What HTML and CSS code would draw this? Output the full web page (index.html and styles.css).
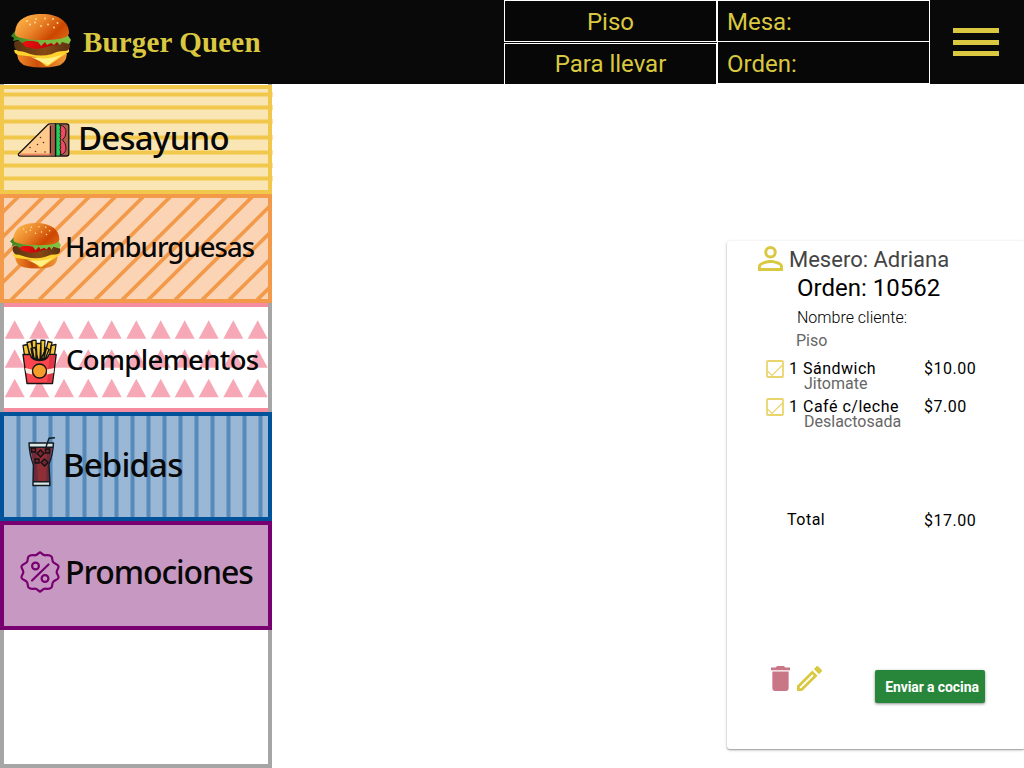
FILE: index.html
```html
<!DOCTYPE html>
<html lang="es">
<head>
<meta charset="utf-8">
<title>Burger Queen</title>
<link rel="stylesheet" href="styles.css">
</head>
<body>
<svg class="defs" width="0" height="0" aria-hidden="true">
  <defs>
    <linearGradient id="bun" x1="0" y1="0.2" x2="1" y2="0.7"><stop offset="0" stop-color="#ffb74a"/><stop offset=".45" stop-color="#e88228"/><stop offset=".8" stop-color="#cc4600"/><stop offset="1" stop-color="#d65d10"/></linearGradient>
    <linearGradient id="bunLow" x1="0" y1="0" x2="1" y2="0"><stop offset="0" stop-color="#f08a2a"/><stop offset=".4" stop-color="#cc4f0a"/><stop offset="1" stop-color="#f09a38"/></linearGradient>
    <linearGradient id="leaf" x1="0" y1="0" x2="1" y2="0"><stop offset="0" stop-color="#38801c"/><stop offset=".5" stop-color="#77b53e"/><stop offset="1" stop-color="#83c340"/></linearGradient>
    <linearGradient id="tomato" x1="0" y1="0" x2="1" y2="0"><stop offset="0" stop-color="#f01010"/><stop offset="1" stop-color="#a40000"/></linearGradient>
    <linearGradient id="meat" x1="0" y1="0" x2="1" y2="0"><stop offset="0" stop-color="#5a3213"/><stop offset=".55" stop-color="#874914"/><stop offset="1" stop-color="#5c3113"/></linearGradient>
    <symbol id="burger" viewBox="0 0 60 54" preserveAspectRatio="none">
      <path fill="url(#bunLow)" d="M6 40H56Q55 50 46 52Q31 55 16 52Q7 50 6 40Z"/>
      <path fill="#ffd22e" d="M3 36L58 35L58 38L53 41L37 52L35 52L24 43L7 41L4 39Z"/>
      <path fill="#fff08a" d="M20 43Q38 47 52 40L37 51Z"/>
      <path fill="url(#meat)" d="M3 30Q3 26 10 27H53Q59 27 59 32Q59 37 53 37Q46 37 41 40Q30 43 19 40Q12 37 7 37Q3 35 3 30Z"/>
      <path fill="url(#tomato)" d="M11 27Q30 23 50 27L46 31L38 32L32 34L25 35L15 33Q11 30 11 27Z"/>
      <path fill="url(#leaf)" d="M0 22L4 17L56 20L60 26L58 30L51 28L49 31L46 28L43 31L40 29L36 31L34 28L30 32L27 28L22 27L15 27L11 29L7 26L2 27L3 24Z"/>
      <path fill="url(#bun)" d="M4 20C4 7 13 0 31 0C48 0 58 8 58 19C58 25 43 26 33 26C18 26 4 24 4 20Z"/>
      <g fill="#ffdf9a"><circle cx="16" cy="7" r=".9"/><circle cx="25" cy="5" r=".9"/><circle cx="34" cy="4.500" r=".9"/><circle cx="42" cy="5" r=".9"/><circle cx="46.500" cy="9" r=".9"/><circle cx="37" cy="10.500" r=".9"/><circle cx="30" cy="12" r=".9"/><circle cx="24" cy="8.500" r=".9"/><circle cx="19" cy="10.500" r=".9"/><circle cx="43" cy="13.500" r=".9"/></g>
    </symbol>
  </defs>
</svg>

<header class="topbar">
  <div class="brand">
    <svg class="brand-icon"><use href="#burger"/></svg>
    <span class="brand-name">Burger Queen</span>
  </div>
  <div class="order-type">
    <div class="cell">Piso</div>
    <div class="cell cell-low">Para llevar</div>
  </div>
  <div class="order-info">
    <div class="cell cell-left">Mesa:</div>
    <div class="cell cell-left cell-joined">Orden:</div>
  </div>
  <button class="menu-button" aria-label="Menú"><span></span><span></span><span></span></button>
</header>

<div class="page">
  <nav class="sidebar">
    <a class="tile tile-breakfast">
      <svg class="decor" viewBox="0 0 273 109"><g fill="#f2c84c"><path fill-opacity=".5" d="M0 7h273v5H0zM0 20h273v5H0zM0 34h273v5H0zM0 50h273v5H0zM0 65h273v5H0zM0 78h273v5H0zM0 91h273v5H0z"/><path d="M0 8h272v3H0zM0 21h272v3H0zM0 35h272v3H0zM0 51h272v3H0zM0 66h272v3H0zM0 79h272v3H0zM0 92h272v3H0z"/></g></svg>
      <svg class="icon icon-sandwich" viewBox="0 0 52 34"><path fill="#ffca8c" stroke="#151515" stroke-width="1.300" stroke-linejoin="round" d="M1 31L30 2Q31 .8 33 .8H38V33H3Q.3 33 1 31Z"/><path fill="#ef8b62" d="M2 30.500H33V32.500H3Z"/><path fill="#a65c48" d="M32 1.500h5.500v31H32z"/><path stroke="#151515" d="M33 3v27"/><path fill="#ad614d" stroke="#151515" stroke-width="1.300" d="M38 .8H49Q51.300.8 51.300 3V31Q51.300 33 49 33H38Z"/><path fill="#f44760" stroke="#151515" stroke-width=".9" d="M42 2Q48.500 3 48.500 9Q48.500 14 45 17Q48.500 20 48.500 25Q48.500 31 42 32Z"/><path fill="#1fd159" d="M38.700 1.500H42q2 3 .5 5q1.500 2 0 4q1.500 2 0 4q1.500 2 0 4q1.500 2 0 4q1.500 2 0 4q1.500 2 0 6h-3.800z"/><path fill="none" stroke="#151515" d="M42 1.500q2 3 .5 5q1.500 2 0 4q1.500 2 0 4q1.500 2 0 4q1.500 2 0 4q1.500 2 0 4q1.500 2 0 6M38.300 1v32"/><g fill="#493326"><circle cx="23" cy="14.500" r=".8"/><circle cx="26" cy="19.500" r=".8"/><circle cx="20" cy="21.500" r=".8"/><circle cx="12.500" cy="24.500" r=".8"/><circle cx="18" cy="28.500" r=".8"/><circle cx="27.500" cy="29" r=".8"/></g></svg>
      <span class="label label-breakfast">Desayuno</span>
    </a>
    <a class="tile tile-burgers">
      <svg class="decor" viewBox="0 0 272 109"><path fill="none" stroke="#f39a4a" stroke-width="3.700" d="M-87 107L19 2M-62 107L44 2M-41 107L65 2M-16 107L90 2M10 107L116 2M38 107L144 2M65 107L171 2M94 107L200 2M121 107L227 2M147 107L253 2M174 107L280 2M201 107L307 2M228 107L334 2M256 107L362 2"/></svg>
      <svg class="icon icon-burger"><use href="#burger"/></svg>
      <span class="label label-burgers">Hamburguesas</span>
    </a>
    <a class="tile tile-sides">
      <svg class="decor" viewBox="0 0 273 109"><defs><path id="tri" d="M-10 18.500L0 0L10 18.500Z"/><g id="triRow" fill="#f7a8b7"><use href="#tri" x="14.700"/><use href="#tri" x="39.300"/><use href="#tri" x="64"/><use href="#tri" x="88.300"/><use href="#tri" x="111.700"/><use href="#tri" x="136.300"/><use href="#tri" x="160.700"/><use href="#tri" x="184.700"/><use href="#tri" x="208.700"/><use href="#tri" x="233.300"/><use href="#tri" x="257.700"/></g></defs><use href="#triRow" y="17.300"/><use href="#triRow" y="46.300"/><use href="#triRow" y="75.700"/></svg>
      <svg class="icon icon-fries" viewBox="0 0 35 45"><g fill="#f4c636" stroke="#151515" stroke-width="1.300" stroke-linejoin="round"><path d="M1 6L5 5L9 19H3ZM29 6L34 5L32 19H27ZM5 3L9 2L12 18H8ZM26 2L30 3L27 19H22ZM10 1L14 .7L15 19H11ZM19 .7L23 1L22 19H18ZM14 4H19V20H14ZM9 9L13 8L16 20H11ZM24 8L27 10L23 20H19Z"/></g><path fill="#fb4650" stroke="#151515" stroke-width="1.400" stroke-linejoin="round" d="M1 15H8Q10 21 17.500 21Q25 21 27 15H34.200L30.500 44H5Z"/><path fill="#df3645" d="M27.500 16H33L29.800 43H25Z"/><path fill="#f4eadb" d="M3 28.500L10 30V35L4.200 33.500ZM32.200 28.500L25 30V35L31.500 33.500Z"/><circle cx="17.500" cy="31.500" r="7" fill="#f59c2c" stroke="#151515" stroke-width="1.300"/></svg>
      <span class="label label-sides">Complementos</span>
    </a>
    <a class="tile tile-drinks">
      <svg class="decor" viewBox="0 0 273 109"><path stroke="#78a0c8" stroke-width="5" d="M18.500 0v109M34.500 0v109M50.500 0v109M67.500 0v109M84.500 0v109M100.500 0v109M116.500 0v109M132.500 0v109M148.500 0v109M164.500 0v109M180.500 0v109M196.500 0v109M212.500 0v109M228.500 0v109M244.500 0v109M260.500 0v109"/><path stroke="#558ab9" stroke-width="3" d="M18.500 0v109M34.500 0v109M50.500 0v109M67.500 0v109M84.500 0v109M100.500 0v109M116.500 0v109M132.500 0v109M148.500 0v109M164.500 0v109M180.500 0v109M196.500 0v109M212.500 0v109M228.500 0v109M244.500 0v109M260.500 0v109"/></svg>
      <svg class="icon icon-soda" viewBox="0 0 27 50"><path fill="#8e2f35" d="M1.500 9H24.500L21 26L22 47H5L6 29Z"/><path fill="#6e2a3a" d="M2 10H8L10 45H6V27ZM19 10H24L21 28V44H18Z"/><path fill="#dce8e6" d="M2 6H24.500V10H2ZM5 45H21V48.500H5Z"/><path fill="none" stroke="#121b22" stroke-width="1.400" stroke-linejoin="round" d="M1 6H25.500Q25 17 21 27L22 48.500H5L5.500 28Q1.500 18 1 6ZM2 10.300H24.500M5 44.800H21.500M18 10L21 1.200L27 .8"/><path fill="#752632" stroke="#121212" stroke-width="1.400" d="M12.500 13L16 16.500L12.500 20L9 16.500ZM16.500 22L20 25.500L16.500 29L13 25.500ZM3.500 11h4v4h-4ZM17.500 12h4v4h-4ZM7 22h4v4H7Z"/></svg>
      <span class="label label-drinks">Bebidas</span>
    </a>
    <a class="tile tile-promos">
      <svg class="icon icon-promo" viewBox="0 0 40 42" fill="none" stroke="#780070" stroke-width="2.200" stroke-linecap="round" stroke-linejoin="round"><path d="M20 1.300C17.500 2.500 17.500 4.500 14.500 4.300C12 4 10.500 3.500 8.500 5.500C7 8 8.500 9.500 6.500 11.500C4.500 13.200 1.500 13.500 1.400 15.500C1.500 18 3.300 18.500 3.300 21C3.300 23.500 1.500 24 1.400 26.500C1.500 28.500 4.500 28.800 6.500 30.500C8.500 32.500 7 34 8.500 36.500C10.500 38.500 12 38 14.500 37.700C17.500 37.500 17.500 39.500 20 40.700C22.500 39.500 22.500 37.500 25.500 37.700C28 38 29.500 38.500 31.500 36.500C33 34 31.500 32.500 33.500 30.500C35.500 28.800 38.500 28.500 38.600 26.500C38.500 24 36.700 23.500 36.700 21C36.700 18.500 38.500 18 38.600 15.500C38.500 13.500 35.500 13.200 33.500 11.500C31.500 9.500 33 8 31.500 5.500C29.500 3.500 28 4 25.500 4.300C22.500 4.500 22.500 2.500 20 1.300Z"/><path d="M12 29.500L28.500 13.500"/><circle cx="15.500" cy="15" r="3.400"/><circle cx="25" cy="27.500" r="3.400"/></svg>
      <span class="label label-promos">Promociones</span>
    </a>
  </nav>

  <main class="workspace">
    <section class="ticket">
      <div class="waiter">
        <svg class="waiter-icon" viewBox="4 4 16 16"><path fill="#dac840" d="M12 5.900a2.100 2.100 0 1 1 0 4.200 2.100 2.100 0 0 1 0-4.200m0 9c2.970 0 6.100 1.460 6.100 2.100v1.100H5.900V17c0-.64 3.130-2.100 6.100-2.100M12 4a4 4 0 1 0 0 8 4 4 0 0 0 0-8zm0 9c-2.670 0-8 1.340-8 4v3h16v-3c0-2.660-5.330-4-8-4z"/></svg>
        <span>Mesero: Adriana</span>
      </div>
      <h2 class="order-number">Orden: 10562</h2>
      <p class="client">Nombre cliente:</p>
      <p class="place">Piso</p>
      <div class="items">
        <div class="item">
          <svg class="check" viewBox="0 0 18 18"><rect x="1" y="1" width="16" height="16" rx="1"/><path d="M1.500 11L6 15.500L16.500 5"/></svg>
          <div class="item-text"><div class="item-name">1 Sándwich</div><div class="item-note">Jitomate</div></div>
          <div class="price">$10.00</div>
        </div>
        <div class="item">
          <svg class="check" viewBox="0 0 18 18"><rect x="1" y="1" width="16" height="16" rx="1"/><path d="M1.500 11L6 15.500L16.500 5"/></svg>
          <div class="item-text"><div class="item-name">1 Café c/leche</div><div class="item-note">Deslactosada</div></div>
          <div class="price">$7.00</div>
        </div>
      </div>
      <div class="total"><span class="total-label">Total</span><span class="total-price">$17.00</span></div>
      <div class="actions">
        <svg class="trash" viewBox="5 3 14 18" preserveAspectRatio="none"><path fill="#c97687" d="M6 19c0 1.100.9 2 2 2h8c1.100 0 2-.9 2-2V7H6v12zM19 4h-3.500l-1-1h-5l-1 1H5v2h14V4z"/></svg>
        <svg class="pencil" viewBox="3 3 18 18"><path fill="#dac840" d="M14.060 9.020l.92.920L5.920 19H5v-.92l9.060-9.060M17.660 3c-.25 0-.51.1-.7.290l-1.830 1.830 3.750 3.750 1.830-1.830c.39-.39.39-1.020 0-1.410l-2.340-2.340c-.2-.2-.45-.29-.71-.29zm-3.600 3.190L3 17.250V21h3.750L17.810 9.940l-3.750-3.750z"/></svg>
        <button class="send">Enviar a cocina</button>
      </div>
    </section>
  </main>
</div>
</body>
</html>
```
FILE: styles.css
```css
* { box-sizing: border-box; }
body { margin: 0; width: 1024px; height: 768px; overflow: hidden; background: #fff; font-family: Roboto, "Liberation Sans", sans-serif; color: #000; }
.defs { position: absolute; }
h2, p { margin: 0; font-weight: 400; }
svg { display: block; flex: none; }

.topbar { display: flex; height: 84px; background: #090909; color: #dac840; }
.brand { display: flex; width: 504px; padding: 14px 0 0 11px; }
.brand-icon { width: 60px; height: 54px; }
.brand-name { margin: 11px 0 0 12px; font: 700 29px/34px "Liberation Serif", serif; letter-spacing: 0.150px; white-space: nowrap; }
.order-type, .order-info { width: 213px; background: #060706; }
.cell { height: 42px; border: 1px solid #fff; font-size: 24px; line-height: 42px; text-align: center; }
.cell-low { margin-top: 1px; height: 41px; border-bottom: 0; line-height: 40px; }
.cell-left { padding-left: 9px; text-align: left; }
.cell-joined { margin-top: -1px; height: 43px; line-height: 45px; }
.menu-button { display: flex; flex-direction: column; gap: 6.700px; margin: 28px 0 0 23px; width: 46px; padding: 0; border: 0; background: none; }
.menu-button span { height: 5px; width: 46px; background: #dac840; }

.page { display: flex; height: 684px; }
.sidebar { flex: none; width: 272px; padding-top: 1px; background: linear-gradient(#a6a6a6, #a6a6a6) 0 0 / 4px 100% no-repeat, linear-gradient(#a6a6a6, #a6a6a6) 100% 0 / 4px 100% no-repeat, linear-gradient(#a6a6a6, #a6a6a6) 0 100% / 100% 4px no-repeat; }
.tile { position: relative; display: flex; height: 109px; border: 4px solid; }
.decor { position: absolute; left: -4px; top: -4px; width: 273px; height: 109px; }
.icon, .label { position: relative; }
.label { font-family: "Noto Sans", "Open Sans", sans-serif; font-weight: 500; line-height: 40px; color: #080808; white-space: nowrap; }
.tile-breakfast { background: #fae6b4; border-color: #f2c84c; }
.tile-burgers { background: #fad4b4; border-color: #f39a4a; }
.tile-burgers .decor { width: 272px; clip-path: inset(4px); }
.tile-sides { border-color: #f58ca0 #a6a6a6; border-width: 0 4px; background: linear-gradient(#f58ca0, #f58ca0) 0 0 / 100% 4px no-repeat, linear-gradient(#f58ca0, #f58ca0) 0 100% / 100% 4px no-repeat #fff; }
.tile-sides .decor { top: 0; clip-path: inset(0 5px 0 4px); }
.tile-drinks { background: #9ab7d5; border-color: #00529b; }
.tile-drinks .decor { clip-path: inset(4px 5px 4px 4px); }
.tile-promos { background: #c799c2; border-color: #780070; }
.icon-sandwich { width: 53px; height: 34px; margin: 34px 0 0 13px; }
.icon-burger { width: 51px; height: 46px; margin: 25px 0 0 6px; }
.icon-fries { width: 35px; height: 46px; margin: 36px 0 0 18px; }
.icon-soda { width: 27px; height: 50px; margin: 21px 0 0 24px; }
.icon-promo { width: 40px; height: 42px; margin: 26px 0 0 16px; }
.label-breakfast { font-size: 33px; margin: 29px 0 0 8px; letter-spacing: -0.750px; }
.label-burgers { font-size: 27.500px; margin: 29px 0 0 4px; letter-spacing: -0.950px; }
.label-sides { font-size: 27.500px; margin: 37px 0 0 9px; letter-spacing: -0.650px; }
.label-drinks { font-size: 33px; margin: 29px 0 0 8px; letter-spacing: -0.850px; }
.label-promos { font-size: 32px; margin: 27px 0 0 5px; letter-spacing: -1.080px; }

.workspace { flex: 1; padding: 157px 0 0 455px; }
.ticket { width: 298px; height: 508px; border-radius: 3px; background: #fff; box-shadow: 0 1px 3px rgba(0,0,0,.3), 0 1px 1px rgba(0,0,0,.18); }
.waiter { display: flex; height: 34px; padding: 5px 0 0 31px; font-size: 22px; line-height: 27px; color: #444; }
.waiter-icon { width: 25px; height: 25px; margin-right: 6px; }
.waiter span { white-space: nowrap; }
.order-number { height: 29px; padding-left: 70px; font-size: 24px; line-height: 27px; }
.client { height: 26px; padding-left: 70px; font-size: 16px; line-height: 28px; font-weight: 300; }
.place { height: 26px; padding-left: 69px; font-size: 16px; line-height: 22px; color: #666; }
.items { height: 155px; padding: 4px 0 0 39px; }
.item { display: flex; height: 38px; }
.check { width: 18px; height: 18px; fill: none; stroke: #ead56d; stroke-width: 1.800; }
.check path { stroke-width: 1.200; }
.item-text { width: 135px; margin-left: 5px; font-size: 16px; line-height: 18px; }
.item-name { height: 15px; letter-spacing: .5px; }
.item-note { padding-left: 15px; color: #666; }
.price { font-size: 16px; line-height: 18px; letter-spacing: .5px; }
.total { display: flex; height: 159px; padding-left: 60px; font-size: 16px; line-height: 18px; letter-spacing: .5px; }
.total-label { width: 137px; }
.total-price { padding-top: 1px; }
.actions { display: flex; padding-left: 44px; }
.trash { width: 19px; height: 25px; margin-top: -4px; }
.pencil { width: 25px; height: 25px; margin: -4px 0 0 7px; }
.send { width: 110px; height: 33px; margin-left: 53px; padding: 0; border: 0; border-radius: 2px; background: #27863a; box-shadow: 0 1px 3px rgba(0,0,0,.45); color: #fff; font: 700 14px/32px Roboto, sans-serif; letter-spacing: -.1px; text-indent: 4px; white-space: nowrap; }
```
